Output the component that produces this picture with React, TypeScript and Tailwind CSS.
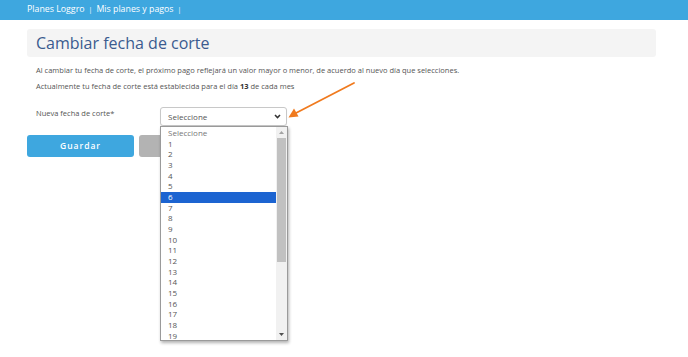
import React from 'react'

const options = ['Seleccione', ...Array.from({ length: 19 }, (_, i) => String(i + 1))]

const App = () => {
  return (
    <div className="relative w-[688px] h-[357px] bg-white overflow-hidden" style={{ fontFamily: '"Open Sans", sans-serif' }}>
      <header className="h-[20px] bg-[#3ea7df] flex items-center px-[27px] text-white text-[8.8px] gap-[4px]">
        <span>Planes Loggro</span>
        <span className="text-[7px]">|</span>
        <span>Mis planes y pagos</span>
        <span className="text-[7px]">|</span>
      </header>

      <main className="px-[27px] pt-[9px]">
        <div className="w-[629px] h-[28px] bg-[#f4f4f4] rounded-[3px] flex items-center px-[9px]">
          <h1 className="text-[16px] text-[#3b5b8f] leading-none">Cambiar fecha de corte</h1>
        </div>

        <div className="px-[9px] pt-[5px] text-[7.5px] text-[#555555]">
          <p className="h-[16px] leading-[16px]">
            Al cambiar tu fecha de corte, el próximo pago reflejará un valor mayor o menor, de acuerdo al nuevo día que selecciones.
          </p>
          <p className="h-[16px] leading-[16px]">
            Actualmente tu fecha de corte está establecida para el día <b className="text-[#333]">13</b> de cada mes
          </p>

          <div className="flex items-start mt-[13px]">
            <label className="w-[124px] pt-[1px]">Nueva fecha de corte*</label>
            <div className="relative">
              <div className="w-[127px] h-[19px] border border-[#c8c8c8] rounded-[3px] bg-white flex items-center justify-between pl-[7px] pr-[5px] shadow-[0_1px_1px_rgba(0,0,0,0.08)]">
                <span className="text-[8px] text-[#555]">Seleccione</span>
                <svg width="7" height="5" viewBox="0 0 7 5">
                  <path d="M1 1 L3.5 3.6 L6 1" fill="none" stroke="#333" strokeWidth="1.5" />
                </svg>
              </div>
              <div className="absolute left-0 top-[19px] w-[128px] h-[215px] bg-white border border-[#9a9a9a] shadow-[1px_2px_3px_rgba(0,0,0,0.3)] flex z-10">
                <ul className="flex-1 pt-[1px]">
                  {options.map((o, i) => (
                    <li
                      key={o}
                      className={`h-[10.68px] leading-[10.68px] pl-[7px] text-[8px] ${
                        i === 6 ? 'bg-[#1c64d1] text-white' : i === 0 ? 'text-[#777]' : 'text-[#555]'
                      }`}
                    >
                      {o}
                    </li>
                  ))}
                </ul>
                <div className="w-[11px] bg-[#f1f1f1] flex flex-col items-center">
                  <div className="h-[11px] flex items-center justify-center">
                    <svg width="5" height="3" viewBox="0 0 5 3"><path d="M0 3 L2.5 0 L5 3Z" fill="#a3a3a3" /></svg>
                  </div>
                  <div className="w-[9px] h-[124px] bg-[#c1c1c1]" />
                  <div className="flex-1" />
                  <div className="h-[11px] flex items-center justify-center">
                    <svg width="5" height="3" viewBox="0 0 5 3"><path d="M0 0 L2.5 3 L5 0Z" fill="#505050" /></svg>
                  </div>
                </div>
              </div>
            </div>
          </div>
        </div>

        <div className="flex gap-[5px] mt-[9px]">
          <button className="w-[107px] h-[22px] rounded-[3px] bg-[#3ea7df] text-white text-[8.5px] font-semibold tracking-[1px]">
            Guardar
          </button>
          <button className="w-[107px] h-[22px] rounded-[3px] bg-[#b3b3b3] text-white text-[8.5px] font-semibold">
            Cancelar
          </button>
        </div>
      </main>

      <svg className="absolute left-0 top-0 pointer-events-none" width="688" height="357">
        <line x1="354" y1="83" x2="296" y2="113" stroke="#f07a1e" strokeWidth="1.8" strokeLinecap="round" />
        <path d="M288.5 117.5 L294 108.5 L298.5 116.5 Z" fill="#f07a1e" />
      </svg>
    </div>
  )
}

export default App
